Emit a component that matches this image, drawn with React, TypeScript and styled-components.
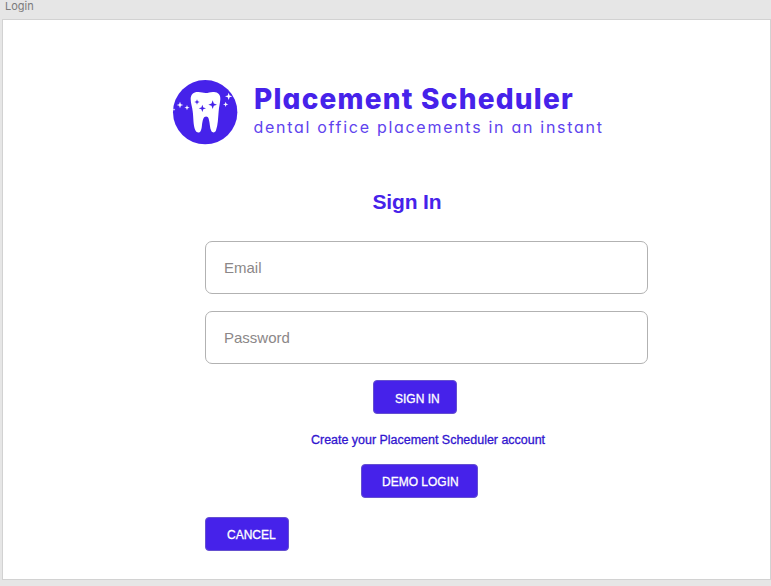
import React from "react";
import styled, { createGlobalStyle } from "styled-components";

const violet = "#4622ea";

const GlobalStyle = createGlobalStyle`
  * { box-sizing: border-box; }
  html, body { margin: 0; padding: 0; }
  body {
    background: #e6e6e6;
    font-family: "Liberation Sans", Arial, sans-serif;
    overflow: hidden;
  }
`;

const Page = styled.div`
  width: 771px;
  height: 586px;
  display: flex;
  flex-direction: column;
`;

const FrameLabel = styled.div`
  height: 19px;
  padding-left: 5px;
  font-family: Inter, sans-serif;
  font-size: 11px;
  line-height: 12px;
  color: #7b7b7b;
`;

const Frame = styled.main`
  width: 769px;
  height: 561px;
  margin-left: 2px;
  padding: 50px 0 0 163px;
  display: flex;
  flex-direction: column;
  background: #fff;
  border: 1px solid #d2d2d2;
`;

const Brand = styled.header`
  display: flex;
  margin-left: -1px;
  height: 80px;
`;

const Logo = styled.svg`
  width: 80px;
  height: 80px;
  flex: none;
`;

const BrandText = styled.div`
  padding: 12px 0 0 8px;
  font-family: Inter, sans-serif;
  font-feature-settings: "cv11";
  white-space: nowrap;
`;

const BrandName = styled.div`
  padding-left: 1px;
  font-size: 28px;
  line-height: 34px;
  font-weight: 800;
  letter-spacing: 1.22px;
  color: ${violet};
`;

const Tagline = styled.div`
  padding-left: 0.5px;
  font-size: 16px;
  line-height: 23px;
  font-weight: 400;
  letter-spacing: 1.71px;
  color: #6043ee;
`;

const Form = styled.form`
  width: 443px;
  margin-left: 39px;
  display: flex;
  flex-direction: column;
`;

const Heading = styled.h1`
  margin: 39px 0 26px 167.5px;
  font-size: 21px;
  line-height: 26px;
  font-weight: 700;
  letter-spacing: -0.15px;
  color: ${violet};
`;

const Fields = styled.div`
  display: grid;
  gap: 17px;
  margin-bottom: 16px;
`;

const Field = styled.input`
  width: 443px;
  height: 53px;
  padding: 0 18px 1px;
  border: 1px solid #b2b2b2;
  border-radius: 7px;
  outline: none;
  background: #fff;
  font: 15px "Liberation Sans", Arial, sans-serif;
  &::placeholder { color: #8b8788; opacity: 1; }
`;

const Button = styled.button<{ $width: number; $left: number; $inset: number; $drop?: number }>`
  width: ${(p) => p.$width}px;
  height: 34px;
  margin: 0 0 0 ${(p) => p.$left}px;
  padding: ${(p) => p.$drop ?? 2}px 0 0 ${(p) => p.$inset}px;
  border: 1px solid #6550d0;
  border-radius: 4px;
  background: ${violet};
  color: #fff;
  font: 12px "Liberation Sans", Arial, sans-serif;
  -webkit-text-stroke: 0.3px #fff;
  text-align: left;
`;

const AccountLink = styled.a`
  margin: 18px 0 15px 106px;
  font-size: 12.5px;
  line-height: 17px;
  letter-spacing: -0.02px;
  color: #3115cf;
  -webkit-text-stroke: 0.3px #3115cf;
  white-space: nowrap;
`;

const Footer = styled.div`
  margin-top: 19px;
`;

const sparkle = (x: number, y: number, r: number) => {
  const k = r * 0.26;
  return `M${x} ${y - r}L${x + k} ${y - k}L${x + r} ${y}L${x + k} ${y + k}L${x} ${y + r}L${x - k} ${y + k}L${x - r} ${y}L${x - k} ${y - k}Z`;
};

const outerSparkles = [[45, 105, 10], [66, 113, 8], [191, 79, 11], [182, 103, 8], [27, 119, 4]];
const innerSparkles = [[96, 96, 8], [112, 115, 11], [143, 104, 13]];

function ToothLogo() {
  return (
    <Logo viewBox="0 0 240 240" aria-hidden="true">
      <circle cx="120.5" cy="126.5" r="96.5" fill={violet} />
      <path
        fill="#fff"
        d="M77 87C77 73 87 65 100 66C109 66 114 69 122 69C130 69 137 65 147 66C159 66 167 75 166 88C165 100 162 111 161 124C159 146 159 165 153 181C151 188 143 190 139 183C134 174 135 158 131 146C129 137 118 137 115 146C110 158 112 174 107 183C103 190 95 189 91 181C84 165 86 145 83 124C82 111 77 101 77 87Z"
      />
      {outerSparkles.map(([x, y, r]) => (
        <path key={x} fill="#fff" d={sparkle(x, y, r)} />
      ))}
      {innerSparkles.map(([x, y, r]) => (
        <path key={x} fill={violet} d={sparkle(x, y, r)} />
      ))}
    </Logo>
  );
}

export default function App() {
  return (
    <>
      <GlobalStyle />
      <Page>
        <FrameLabel>Login</FrameLabel>
        <Frame>
          <Brand>
            <ToothLogo />
            <BrandText>
              <BrandName>Placement Scheduler</BrandName>
              <Tagline>dental office placements in an instant</Tagline>
            </BrandText>
          </Brand>
          <Form>
            <Heading>Sign In</Heading>
            <Fields>
              <Field type="email" placeholder="Email" />
              <Field type="password" placeholder="Password" />
            </Fields>
            <Button type="button" $width={84} $left={168} $inset={21} $drop={4}>SIGN IN</Button>
            <AccountLink>Create your Placement Scheduler account</AccountLink>
            <Button type="button" $width={117} $left={156} $inset={20}>DEMO LOGIN</Button>
            <Footer>
              <Button type="button" $width={84} $left={0} $inset={21}>CANCEL</Button>
            </Footer>
          </Form>
        </Frame>
      </Page>
    </>
  );
}
